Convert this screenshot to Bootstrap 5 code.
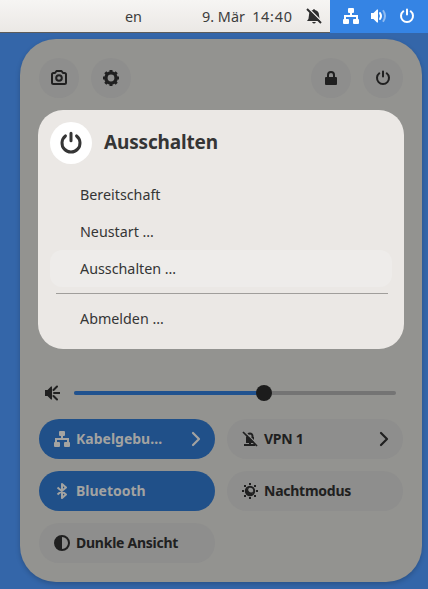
<!DOCTYPE html>
<html lang="de">
<head>
<meta charset="utf-8">
<meta name="viewport" content="width=device-width, initial-scale=1">
<title>Schnelleinstellungen</title>
<link href="https://cdn.jsdelivr.net/npm/bootstrap@5.3.0/dist/css/bootstrap.min.css" rel="stylesheet">
<style>
body{width:428px;height:589px;background:#3466a9;font-family:"Noto Sans","Open Sans",sans-serif;font-size:14.5px;line-height:20px;color:#2e3436}
svg{display:block;flex:none}
.topbar{height:33px;background:linear-gradient(#f6f5f3,#ebe8e5);border-bottom:1px solid #5d5c5a;color:#3d3d3d;font-size:14.4px}
.lang{width:16px;margin-left:125px;margin-right:61px}
.clock{width:90px;margin-right:14px}
.lang,.clock{padding-top:1px}
.clock-time{letter-spacing:.75px;margin-right:-.7px}
.tray{width:98px;height:33px;background:#3584e4;color:#fff;padding-left:13px;gap:12px}
.panel{width:402px;height:543px;margin:6px 0 0 20px;background:#939390;border-radius:36px;padding:19px 18px 0;box-shadow:0 2px 5px rgba(0,0,0,.2);color:#202020}
.tools{gap:12px;padding:0 1px}
.round{width:40px;height:40px;border-radius:50%;background:#8e8e8d;color:#202020;border:0;padding:0}
.dialog{height:239px;margin-top:12px;background:#ebe8e5;border-radius:25px;padding:12px;color:#353535}
.bigicon{width:42px;height:42px;background:#fff;color:#353535}
.heading{font-size:19px;font-weight:700;margin:0 0 2px 12px;line-height:26px;letter-spacing:-.17px}
.entries{margin-top:12px}
.entry{height:37px;padding:0 0 0 30px;border:0;background:none;border-radius:12px;color:#353535;text-align:left;font-size:14.3px;line-height:37px}
.entry.current{background:#eeecea}
.divide{height:1px;background:#a09e9b;margin:6px 4px 6px 6px}
.slider{height:16px;margin:36px 8px 0 6px}
.track{width:322px;height:4px;background:#747474;border-radius:2px;margin-left:14px}
.filled{width:190px;height:4px;background:#20528f;border-radius:2px}
.knob{width:16px;height:16px;border-radius:50%;background:#1c1c1c;margin-left:-8px}
.tiles{display:grid;grid-template-columns:176px 176px;gap:12px;margin:18px 0 0 1px}
.tile{height:40px;border-radius:20px;border:0;background:#8e8e8d;color:#202020;padding:0 11px 0 15px;font-weight:700;font-size:14px;text-align:left;letter-spacing:-.25px}
.tile.on{background:#205089;color:#a3a3a1;letter-spacing:0}
.tile span{margin:0 0 0 6px;white-space:nowrap}
</style>
</head>
<body class="overflow-hidden">
<svg width="0" height="0" class="position-absolute" aria-hidden="true">
<symbol id="net" viewBox="0 0 16 16"><path fill="currentColor" d="M6 0h4q1 0 1 1v3q0 1-1 1H9v2h6v4q1 0 1 1v3q0 1-1 1h-4q-1 0-1-1v-3q0-1 1-1h2V9H3v2h2q1 0 1 1v3q0 1-1 1H1q-1 0-1-1v-3q0-1 1-1V7h6V5H6Q5 5 5 4V1q0-1 1-1z"/></symbol>
<symbol id="power" viewBox="0 0 16 16"><path fill="none" stroke="currentColor" stroke-width="2" stroke-linecap="round" d="M4.300 3.300a6 6 0 1 0 7.400 0M8 1.500v5"/></symbol>
<symbol id="chev" viewBox="0 0 16 16"><path fill="none" stroke="currentColor" stroke-width="2.200" stroke-linecap="round" stroke-linejoin="round" d="m5 2 6 6-6 6"/></symbol>
</svg>
<header class="topbar d-flex align-items-center">
<div class="lang">en</div>
<div class="clock text-nowrap d-flex justify-content-between"><span>9. Mär</span><span class="clock-time">14:40</span></div>
<svg width="16" height="16" viewBox="0 0 16 16"><path fill="#2e2e2e" d="M1 13q2-2 2-6 0-4 4-5 1-2 2 0 4 1 4 5 0 4 2 6zM6 14h4q-2 3-4 0z"/><path d="M2 0 16 14" stroke="#f0eeec" stroke-width="1.600"/><path d="M1 1 15 15" stroke="#2e2e2e" stroke-width="2"/></svg>
<div class="tray d-flex align-items-center ms-auto">
<svg width="16" height="16"><use href="#net"/></svg>
<svg width="16" height="16" viewBox="0 0 16 16"><path fill="#fff" d="M0 5h2.500L6 1.500h1v13H6L2.500 11H0z"/><path fill="none" stroke="#fff" stroke-width="2" stroke-linecap="round" d="M9 5q2 3 0 6"/><path fill="none" stroke="#fff" stroke-opacity=".45" stroke-width="2" d="M12 2.300q4 5.700 0 11.400"/></svg>
<svg width="16" height="16"><use href="#power"/></svg>
</div>
</header>
<main class="panel">
<div class="d-flex tools">
<button class="round d-flex align-items-center justify-content-center" aria-label="Bildschirmfoto"><svg width="16" height="16" viewBox="0 0 16 16" fill="none" stroke="currentColor" stroke-width="2"><path stroke-linejoin="round" d="M2.500 3H4l1.500-2h5L12 3h1.500Q15 3 15 4.500v8q0 1.500-1.500 1.500h-11Q1 14 1 12.500v-8Q1 3 2.500 3z"/><circle cx="8" cy="8" r="2.800"/></svg></button>
<button class="round d-flex align-items-center justify-content-center" aria-label="Einstellungen"><svg width="16" height="16" viewBox="0 0 16 16" fill="none" stroke="currentColor"><circle cx="8" cy="8" r="5.100" stroke-width="3.400"/><path stroke-width="3" d="M8 0v3M8 13v3M0 8h3M13 8h3M2.300 2.300l2 2M11.700 11.700l2 2M13.700 2.300l-2 2M4.300 11.700l-2 2"/></svg></button>
<button class="round ms-auto d-flex align-items-center justify-content-center" aria-label="Sperren"><svg width="16" height="16" viewBox="0 0 16 16"><path d="M5 8V5a3 3 0 0 1 6 0v3" fill="none" stroke="currentColor" stroke-width="2"/><path fill="currentColor" d="M3 7h10q1 0 1 1v6q0 1-1 1H3q-1 0-1-1V8q0-1 1-1z"/></svg></button>
<button class="round d-flex align-items-center justify-content-center" aria-label="Ausschalten"><svg width="16" height="16"><use href="#power"/></svg></button>
</div>
<section class="dialog">
<div class="d-flex align-items-center"><div class="bigicon rounded-circle d-flex align-items-center justify-content-center"><svg width="24" height="24"><use href="#power"/></svg></div><h2 class="heading">Ausschalten</h2></div>
<div class="entries d-flex flex-column">
<button class="entry">Bereitschaft</button>
<button class="entry">Neustart …</button>
<button class="entry current">Ausschalten …</button>
<div class="divide"></div>
<button class="entry">Abmelden …</button>
</div>
</section>
<div class="slider d-flex align-items-center">
<svg width="16" height="16" viewBox="0 0 16 16"><path fill="currentColor" d="M1 5h2.500L7 1.500h1v13H7L3.500 11H1z"/><path d="M9.500 5 13 1.500M10 8h5.500M9.500 11l3.500 3.500" stroke="currentColor" stroke-width="2" stroke-linecap="round"/></svg>
<div class="track d-flex align-items-center"><div class="filled"></div><div class="knob"></div></div>
</div>
<div class="tiles">
<button class="tile on d-flex align-items-center"><svg width="16" height="16"><use href="#net"/></svg><span>Kabelgebu…</span><svg class="ms-auto" width="16" height="16"><use href="#chev"/></svg></button>
<button class="tile d-flex align-items-center"><svg width="16" height="16" viewBox="0 0 16 16"><path d="M5.500 7V5a2.500 2.500 0 0 1 5 0v3" fill="none" stroke="currentColor" stroke-width="2"/><path fill="currentColor" d="M4 6h8v6H9v1h4v2H2v-2h5v-1H4z"/><path d="M2 0 16 14" stroke="#8e8e8d" stroke-width="1.500"/><path d="m1 1 14 14" stroke="currentColor" stroke-width="1.700"/></svg><span>VPN 1</span><svg class="ms-auto" width="16" height="16"><use href="#chev"/></svg></button>
<button class="tile on d-flex align-items-center"><svg width="16" height="16" viewBox="0 0 16 16"><path fill="none" stroke="currentColor" stroke-width="2" stroke-linejoin="round" d="m3.500 4.500 8.500 7L8 15V1l4 3.500-8.500 7"/></svg><span>Bluetooth</span></button>
<button class="tile d-flex align-items-center"><svg width="16" height="16" viewBox="0 0 16 16"><circle cx="8" cy="8" r="4.200" fill="none" stroke="currentColor" stroke-width="2"/><path fill="currentColor" d="M7 5a2 2 0 0 0 4 3.500A3.500 3.500 0 1 1 7 5zM7 0h2v2H7zM7 14h2v2H7zM0 7h2v2H0zM14 7h2v2h-2zM2 2h2v2H2zM12 2h2v2h-2zM2 12h2v2H2zM12 12h2v2h-2z"/></svg><span>Nachtmodus</span></button>
<button class="tile d-flex align-items-center"><svg width="16" height="16" viewBox="0 0 16 16"><circle cx="8" cy="8" r="7" fill="none" stroke="currentColor" stroke-width="2"/><path fill="currentColor" d="M8 1v14A7 7 0 0 1 8 1z"/></svg><span>Dunkle Ansicht</span></button>
</div>
</main>
<script src="https://cdn.jsdelivr.net/npm/bootstrap@5.3.0/dist/js/bootstrap.bundle.min.js"></script>
</body>
</html>
